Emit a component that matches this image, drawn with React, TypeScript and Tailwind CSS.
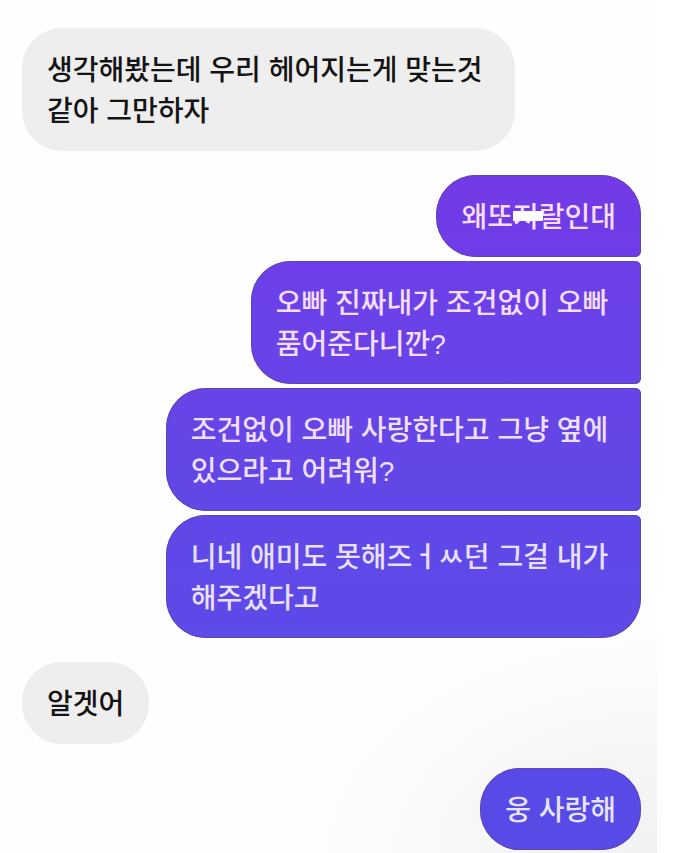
import type { ReactNode } from "react";
import clsx from "clsx";

type Message = {
  id: number;
  from: "me" | "them";
  body: ReactNode;
  tone?: string;
};

type Group = { id: number; from: "me" | "them"; messages: Message[] };

function Redacted({ children }: { children: ReactNode }) {
  return (
    <span className="relative">
      {children}
      <span className="absolute top-[9px] left-0 h-2.5 w-[30px] bg-white" />
    </span>
  );
}

const groups: Group[] = [
  {
    id: 1,
    from: "them",
    messages: [
      { id: 1, from: "them", body: "생각해봤는데 우리 헤어지는게 맞는것 \n같아 그만하자" },
    ],
  },
  {
    id: 2,
    from: "me",
    messages: [
      {
        id: 2,
        from: "me",
        tone: "bg-linear-to-b from-[#723ae5] to-[#6f3de8] text-[#f6def9]",
        body: (
          <>
            왜또<Redacted>지</Redacted>랄인대
          </>
        ),
      },
      {
        id: 3,
        from: "me",
        tone: "bg-linear-to-b from-[#6d3fe8] to-[#6843e8] text-[#f2def8]",
        body: "오빠 진짜내가 조건없이 오빠 \n품어준다니깐?",
      },
      {
        id: 4,
        from: "me",
        tone: "bg-linear-to-b from-[#6843e7] to-[#6148e6] text-[#eedffa]",
        body: "조건없이 오빠 사랑한다고 그냥 옆에 \n있으라고 어려워?",
      },
      {
        id: 5,
        from: "me",
        tone: "bg-linear-to-b from-[#6148e8] to-[#5d4ae8] text-[#e9e0fb]",
        body: "니네 애미도 못해즈ㅓㅆ던 그걸 내가 \n해주겠다고",
      },
    ],
  },
  { id: 3, from: "them", messages: [{ id: 6, from: "them", body: "알겟어" }] },
  {
    id: 4,
    from: "me",
    messages: [
      { id: 7, from: "me", tone: "bg-[#584ae6] text-[#e6e4fb]", body: "웅 사랑해" },
    ],
  },
];

function Bubble({ message, first, last }: { message: Message; first: boolean; last: boolean }) {
  const mine = message.from === "me";
  return (
    <li
      className={clsx(
        "rounded-[40px] px-[25px] pt-[22px] pb-[19px] whitespace-pre",
        mine ? "inset-ring inset-ring-[#6045b4]" : "bg-[#eeeeee] text-[#141414]",
        mine && !first && "rounded-tr-md",
        mine && !last && "rounded-br-md",
        message.tone,
      )}
    >
      {message.body}
    </li>
  );
}

export default function App() {
  return (
    <div className="min-h-screen bg-white pr-[25px]">
      <main
        className="flex min-h-screen flex-col gap-6 bg-[radial-gradient(ellipse_360px_230px_at_100%_100%,#f1f1f1,#f6f6f6_45%,#fefefe)] pt-7 pr-4 pl-[22px] text-[28px] leading-[41px] font-medium font-['Liberation_Sans','Noto_Sans_CJK_KR',sans-serif]"
        lang="ko"
      >
        {groups.map((group) => (
          <ul
            key={group.id}
            className={clsx("flex flex-col gap-1", group.from === "me" ? "items-end" : "items-start")}
          >
            {group.messages.map((message, i) => (
              <Bubble
                key={message.id}
                message={message}
                first={i === 0}
                last={i === group.messages.length - 1}
              />
            ))}
          </ul>
        ))}
      </main>
    </div>
  );
}
